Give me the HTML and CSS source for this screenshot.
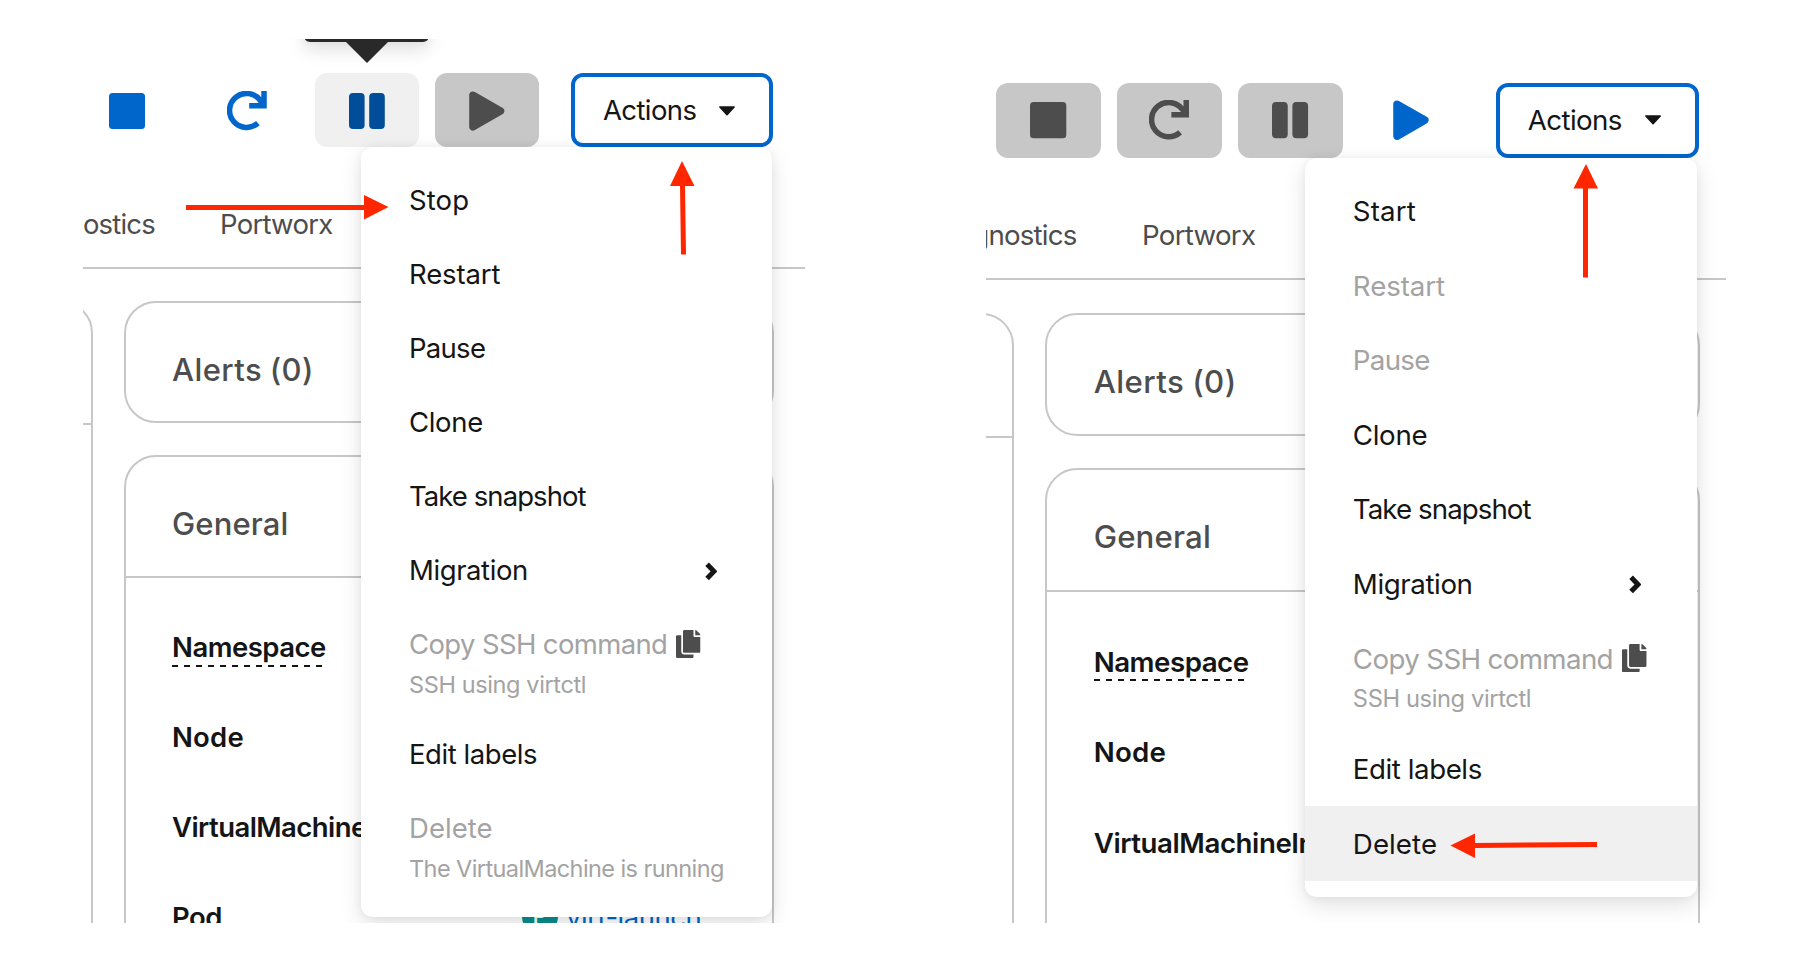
FILE: index.html
```html
<!DOCTYPE html>
<html lang="en">
<head>
<meta charset="utf-8">
<title>VirtualMachine actions</title>
<link rel="stylesheet" href="styles.css">
</head>
<body>
<svg class="defs" width="0" height="0">
  <symbol id="stop" viewBox="0 0 40 40"><rect x="2" y="2" width="36" height="36" rx="3.5" fill="currentColor"/></symbol>
  <symbol id="redo" viewBox="0 0 40 40"><path d="M30.9 32.1A17 17 0 1 1 33.4 9.6L36 13M37 0V14.7H22.2" fill="none" stroke="currentColor" stroke-width="5.5"/></symbol>
  <symbol id="pause" viewBox="0 0 40 40"><rect x="2" y="2" width="15.6" height="36" rx="4" fill="currentColor"/><rect x="22.2" y="2" width="15.6" height="36" rx="4" fill="currentColor"/></symbol>
  <symbol id="play" viewBox="0 0 40 40"><path d="M6 4.2L33.5 20L6 35.8Z" fill="currentColor" stroke="currentColor" stroke-width="7.6" stroke-linejoin="round"/></symbol>
  <symbol id="caret" viewBox="0 0 16 10"><path d="M.9 1H15.1L8 8.6Z" fill="currentColor" stroke="currentColor" stroke-width="1.6" stroke-linejoin="round"/></symbol>
  <symbol id="chevron" viewBox="0 0 12 18"><path d="M2 2.2L8.6 9L2 15.8" fill="none" stroke="currentColor" stroke-width="4.8"/></symbol>
  <symbol id="copy" viewBox="0 0 448 512"><path fill="currentColor" d="M320 448v40c0 13.255-10.745 24-24 24H24c-13.255 0-24-10.745-24-24V120c0-13.255 10.745-24 24-24h72v296c0 30.879 25.121 56 56 56h168zm0-344V0H152c-13.255 0-24 10.745-24 24v368c0 13.255 10.745 24 24 24h272c13.255 0 24-10.745 24-24V128H344c-13.2 0-24-10.8-24-24zm120.971-31.029L375.029 7.029A24 24 0 0 0 358.059 0H352v96h96v-6.059a24 24 0 0 0-7.029-16.97z"/></symbol>
</svg>

<main class="shots">
  <section class="panel running">
    <div class="toolbar">
      <button class="tool"><svg><use href="#stop"/></svg></button>
      <button class="tool"><svg><use href="#redo"/></svg></button>
      <button class="tool hover"><svg><use href="#pause"/></svg></button>
      <button class="tool off"><svg><use href="#play"/></svg></button>
      <button class="actions"><span class="text actions-text">Actions</span><svg><use href="#caret"/></svg></button>
    </div>
    <nav class="tabs"><span class="tab first"><span class="text">Diagnostics</span></span><span class="tab"><span class="text">Portworx</span></span></nav>
    <div class="cards">
      <div class="card side"><div class="card-head"></div></div>
      <div class="column">
        <div class="card alerts"><h2 class="title wide">Alerts (0)</h2></div>
        <div class="card general">
          <div class="card-head"><h2 class="title">General</h2></div>
          <dl class="rows">
            <dt class="dashed">Namespace</dt>
            <dt class="node">Node</dt>
            <dt class="vmi">VirtualMachineInstance</dt>
            <div class="pair"><dt>Pod</dt><dd><span class="badge"><b>P</b></span><a class="pod-link">virt-launch</a></dd></div>
          </dl>
        </div>
      </div>
    </div>
    <div class="tooltip"></div>
    <svg class="tooltip-tip" viewBox="0 0 44 22"><path d="M0 0H44L22 22Z"/></svg>
    <ul class="menu">
      <li><span class="text stop">Stop</span></li>
      <li><span class="text restart">Restart</span></li>
      <li><span class="text pause">Pause</span></li>
      <li><span class="text clone">Clone</span></li>
      <li><span class="text snapshot">Take snapshot</span></li>
      <li><span class="text migration">Migration</span><svg class="chevron"><use href="#chevron"/></svg></li>
      <li class="disabled"><span class="text copy">Copy SSH command</span><svg class="copy-icon"><use href="#copy"/></svg><span class="note">SSH using virtctl</span></li>
      <li><span class="text edit">Edit labels</span></li>
      <li class="disabled"><span class="text delete">Delete</span><span class="note long">The VirtualMachine is running</span></li>
    </ul>
  </section>

  <section class="panel stopped">
    <div class="toolbar">
      <button class="tool off"><svg><use href="#stop"/></svg></button>
      <button class="tool off"><svg><use href="#redo"/></svg></button>
      <button class="tool off"><svg><use href="#pause"/></svg></button>
      <button class="tool"><svg><use href="#play"/></svg></button>
      <button class="actions"><span class="text actions-text">Actions</span><svg><use href="#caret"/></svg></button>
    </div>
    <nav class="tabs"><span class="tab first"><span class="text">Diagnostics</span></span><span class="tab"><span class="text">Portworx</span></span></nav>
    <div class="cards">
      <div class="card side"><div class="card-head"></div></div>
      <div class="column">
        <div class="card alerts"><h2 class="title wide">Alerts (0)</h2></div>
        <div class="card general">
          <div class="card-head"><h2 class="title">General</h2></div>
          <dl class="rows">
            <dt class="dashed">Namespace</dt>
            <dt class="node">Node</dt>
            <dt class="vmi">VirtualMachineInstance</dt>
            <dt>Pod</dt>
          </dl>
        </div>
      </div>
    </div>
    <ul class="menu">
      <li><span class="text stop">Start</span></li>
      <li class="disabled"><span class="text restart">Restart</span></li>
      <li class="disabled"><span class="text pause">Pause</span></li>
      <li><span class="text clone">Clone</span></li>
      <li><span class="text snapshot">Take snapshot</span></li>
      <li><span class="text migration">Migration</span><svg class="chevron"><use href="#chevron"/></svg></li>
      <li class="disabled"><span class="text copy">Copy SSH command</span><svg class="copy-icon"><use href="#copy"/></svg><span class="note">SSH using virtctl</span></li>
      <li><span class="text edit">Edit labels</span></li>
      <li class="current"><span class="text delete">Delete</span></li>
    </ul>
  </section>
</main>

<svg class="arrows" viewBox="0 0 1802 963">
  <path d="M186 205H364V195L388.5 207L364 219.500V210H186Z"/>
  <path d="M682 161L694.500 186H685L686 254.500H681L680 186H670Z"/>
  <path d="M1586 164L1598 188.500H1588V277.500H1583V188.500H1573.500Z"/>
  <path d="M1450.500 845.500L1475 833.500V843L1597 842V847L1475 848V858Z"/>
</svg>
</body>
</html>
```
FILE: styles.css
```css
* { box-sizing: border-box; }

body {
  margin: 0;
  background: #fff;
  color: #151515;
  font-family: Inter, "Liberation Sans", sans-serif;
}

.defs { display: block; }

.shots {
  display: flex;
  gap: 181px;
  height: 963px;
  padding: 39px 76px 40px 83px;
  overflow: hidden;
}

/* Each panel is sized in em: 1em is 10px on the left, slightly more on the right. */
.panel {
  position: relative;
  height: 884px;
  overflow: hidden;
}

.running { width: 722px; --shift: -8px; font-size: 10px; padding-top: 34px; }
.stopped { width: 740px; --shift: 10px; font-size: 10.075px; padding-top: 44px; }

.toolbar {
  display: flex;
  gap: 1.6em;
  margin-left: var(--shift);
}

.tool {
  display: flex;
  flex: none;
  align-items: center;
  justify-content: center;
  width: 10.4em;
  height: 7.4em;
  padding: 0;
  border: 0;
  border-radius: 1.2em;
  background: none;
  color: #06c;
  font-size: inherit;
}

.running .tool { padding-top: .2em; }
.tool svg { width: 4em; height: 4em; }
.tool.hover { background: #f0f0f0; color: #004d99; }
.tool.off { background: #c7c7c7; color: #4d4d4d; }

.actions {
  display: flex;
  flex: none;
  align-items: center;
  gap: 2.3em;
  width: 20.2em;
  height: 7.4em;
  margin-left: 1.6em;
  padding: .2em 0 0 2.8em;
  border: .4em solid #06c;
  border-radius: 1.2em;
  background: #fff;
  color: #151515;
  font-family: inherit;
  font-size: inherit;
}

.stopped .actions { padding-top: 0; }
.actions svg { width: 1.6em; height: 1em; }

.text {
  font-size: 2.75em;
  line-height: 1.4545;
  white-space: nowrap;
}

.actions-text { letter-spacing: -.022em; }

.tabs {
  display: flex;
  gap: 6.5em;
  height: 12.2em;
  padding-top: 5.7em;
  padding-left: 10px;
  border-bottom: .2em solid #c7c7c7;
  color: #4d4d4d;
}

.running .tabs { padding-top: 5.8em; padding-left: 0; }
.tab .text { letter-spacing: -.027em; }
.tab.first { display: flex; flex: none; justify-content: flex-end; width: 8em; }
.running .tab.first { width: 7.2em; }
.tab.first .text { letter-spacing: -.029em; }

.cards {
  display: flex;
  gap: 3.1em;
  margin-left: calc(var(--shift) - 20em);
  padding-top: 3.2em;
}

.card {
  flex: none;
  border: .2em solid #c7c7c7;
  border-radius: 3.2em;
  background: #fff;
}

.side { width: 21.8em; height: 90em; }
.card-head { height: 12.1em; border-bottom: .2em solid #c7c7c7; }
.side .card-head { height: 12.2em; }

.column {
  display: flex;
  flex: none;
  flex-direction: column;
  gap: 3.2em;
  width: 65em;
}

.alerts { height: 12.2em; overflow: hidden; }
.general { height: 70em; }

.title {
  margin: 0;
  padding: 1.51em 0 0 1.484em;
  color: #4d4d4d;
  font-size: 3.1em;
  font-weight: 500;
  letter-spacing: .004em;
  line-height: 1.29;
}

.title.wide { letter-spacing: .0135em; word-spacing: -.03em; }

.rows {
  display: flex;
  flex-direction: column;
  align-items: flex-start;
  gap: 6em;
  margin: 0;
  padding: 5.4em 0 0 4.6em;
}

.stopped .rows { padding-top: 5.45em; }

dt {
  height: 1.0909em;
  font-size: 2.75em;
  font-weight: 600;
  letter-spacing: -.018em;
  line-height: 1.0909;
}

.node { letter-spacing: .008em; }
.vmi { letter-spacing: -.02em; }
.stopped .vmi { letter-spacing: -.016em; }

.dashed {
  height: 1.2727em;
  margin-bottom: -.1818em;
  background: repeating-linear-gradient(90deg, #151515 0 6px, transparent 6px 12px) left bottom / 100% 2px no-repeat;
}

.stopped .dashed { height: 1.25em; margin-bottom: -.1591em; }

.pair { display: grid; grid-template-columns: 35em auto; }
.pair dd { display: flex; align-items: center; gap: .8em; margin: 0; }

.badge {
  width: 3.6em;
  height: 3em;
  border-radius: 1.5em;
  background: #0b8e8c;
  color: #fff;
  text-align: center;
}

.badge b { font-size: 2.3em; font-weight: 500; line-height: 1.3; }
.pod-link { color: #06c; font-size: 2.75em; line-height: 1.0909; letter-spacing: -.018em; }

.tooltip {
  position: absolute;
  top: -20px;
  left: 221px;
  width: 125px;
  height: 23px;
  border-radius: 6px;
  background: #292929;
  box-shadow: 0 8px 18px rgba(3, 3, 3, .12), 0 0 10px rgba(3, 3, 3, .05);
}

.tooltip-tip {
  position: absolute;
  top: 2px;
  left: 262px;
  width: 44px;
  height: 22px;
  fill: #292929;
}

.menu {
  position: absolute;
  margin: 0;
  padding: 1.6em 0;
  border-radius: 1.2em;
  background: #fff;
  box-shadow: 0 8px 22px rgba(3, 3, 3, .12), 0 0 9px rgba(3, 3, 3, .05);
  list-style: none;
}

.running .menu { top: 108px; left: 278px; width: 411px; height: 770px; }
.stopped .menu { top: 118.500px; left: 318.500px; width: 392px; height: 739.500px; }

.menu li {
  display: flex;
  flex-wrap: wrap;
  align-items: center;
  min-height: 7.4em;
  padding: 1.75em 0 1.65em 4.8em;
}

.running .menu li { padding-top: 1.8em; padding-bottom: 1.6em; }
.menu li:has(.note), .running .menu li:has(.note) { padding-bottom: 1.3em; }
.running .menu li:last-child { padding-bottom: 0; }
.disabled { color: #a3a3a3; }
.current { background: #f0f0f0; }

.chevron { width: 1.25em; height: 1.875em; margin: 0 5.5em 0 auto; }
.copy-icon { width: 2.45em; height: 2.8em; margin: -.2em 1em 0 .9em; color: #4d4d4d; }

.note {
  flex: 0 0 100%;
  font-size: 2.35em;
  letter-spacing: -.016em;
  line-height: 1.68;
  white-space: nowrap;
}

.long { letter-spacing: -.025em; }
.stop { letter-spacing: .004em; }
.restart { letter-spacing: -.004em; }
.pause { letter-spacing: -.026em; }
.clone { letter-spacing: -.012em; }
.snapshot { letter-spacing: -.034em; }
.migration { letter-spacing: -.015em; }
.copy { letter-spacing: -.023em; }
.edit { letter-spacing: -.016em; }
.delete { letter-spacing: .002em; }

.arrows {
  position: absolute;
  top: 0;
  left: 0;
  width: 1802px;
  height: 963px;
  fill: #ff2600;
}
```
